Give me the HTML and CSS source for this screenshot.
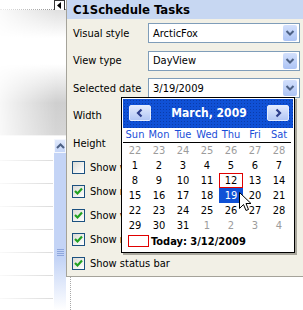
FILE: index.html
```html
<!DOCTYPE html>
<html lang="en">
<head>
  <meta charset="UTF-8" />
  <title>C1Schedule Tasks</title>
  <link rel="stylesheet" href="styles.css">
</head>
<body>

<div class="screen">
  <div class="side">
    <div class="side-top">
      <span class="pin-btn">
        <svg width="5" height="7" viewBox="0 0 5 7"><path d="M4 0 L0 3.5 L4 7 Z" fill="#000"/></svg>
      </span>
    </div>
    <div class="side-band"></div>
    <div class="side-gap"></div>
    <div class="side-dark"></div>
    <div class="side-list">
      <div class="rows">
        <div></div><div></div><div></div><div></div><div></div><div></div><div></div>
      </div>
      <div class="vscroll">
        <span class="vs-up">
          <svg width="9" height="6" viewBox="0 0 9 6"><path d="M1 5 L4.5 1.5 L8 5" fill="none" stroke="#4d6185" stroke-width="2"/></svg>
        </span>
        <span class="vs-grip"></span>
      </div>
    </div>
  </div>

  <div class="main">
    <div class="tasks">
      <div class="tasks-head">C1Schedule Tasks</div>

      <div class="fields">
        <div class="frow">
          <label>Visual style</label>
          <div class="combo"><span>ArcticFox</span><span class="combo-btn"><svg width="14" height="16" viewBox="0 0 14 16"><path d="M3.5 6 L7 9.5 L10.5 6" fill="none" stroke="#4d6185" stroke-width="2"/></svg></span></div>
        </div>
        <div class="frow">
          <label>View type</label>
          <div class="combo"><span>DayView</span><span class="combo-btn"><svg width="14" height="16" viewBox="0 0 14 16"><path d="M3.5 6 L7 9.5 L10.5 6" fill="none" stroke="#4d6185" stroke-width="2"/></svg></span></div>
        </div>
        <div class="frow">
          <label>Selected date</label>
          <div class="combo"><span>3/19/2009</span><span class="combo-btn"><svg width="14" height="16" viewBox="0 0 14 16"><path d="M3.5 6 L7 9.5 L10.5 6" fill="none" stroke="#4d6185" stroke-width="2"/></svg></span></div>
        </div>
        <div class="frow"><label>Width</label></div>
        <div class="frow"><label>Height</label></div>
      </div>

      <!-- only the start of the first four labels shows beside the open calendar -->
      <div class="checks">
        <div class="chk-row"><span class="chk"></span>Show w</div>
        <div class="chk-row"><span class="chk on"><svg width="11" height="11" viewBox="0 0 11 11"><path d="M2 5 L4.5 7.5 L9 2.5" fill="none" stroke="#21a121" stroke-width="2.2"/></svg></span>Show m</div>
        <div class="chk-row"><span class="chk on"><svg width="11" height="11" viewBox="0 0 11 11"><path d="M2 5 L4.5 7.5 L9 2.5" fill="none" stroke="#21a121" stroke-width="2.2"/></svg></span>Show v</div>
        <div class="chk-row"><span class="chk on"><svg width="11" height="11" viewBox="0 0 11 11"><path d="M2 5 L4.5 7.5 L9 2.5" fill="none" stroke="#21a121" stroke-width="2.2"/></svg></span>Show n</div>
        <div class="chk-row"><span class="chk on"><svg width="11" height="11" viewBox="0 0 11 11"><path d="M2 5 L4.5 7.5 L9 2.5" fill="none" stroke="#21a121" stroke-width="2.2"/></svg></span>Show status bar</div>
      </div>

      <!-- drop-down calendar of the "Selected date" combo -->
      <div class="cal">
        <div class="cal-head">
          <span class="cal-btn"><svg width="10" height="10" viewBox="0 0 10 10"><path d="M6.5 1.5 L3 5 L6.5 8.5" fill="none" stroke="#2d3e8c" stroke-width="2.2"/></svg></span>
          <span class="cal-title">March, 2009</span>
          <span class="cal-btn"><svg width="10" height="10" viewBox="0 0 10 10"><path d="M3.5 1.5 L7 5 L3.5 8.5" fill="none" stroke="#2d3e8c" stroke-width="2.2"/></svg></span>
        </div>
        <div class="dow">
          <span>Sun</span><span>Mon</span><span>Tue</span><span>Wed</span><span>Thu</span><span>Fri</span><span>Sat</span>
        </div>
        <div class="days">
          <span class="off">22</span><span class="off">23</span><span class="off">24</span><span class="off">25</span><span class="off">26</span><span class="off">27</span><span class="off">28</span>
          <span>1</span><span>2</span><span>3</span><span>4</span><span>5</span><span>6</span><span>7</span>
          <span>8</span><span>9</span><span>10</span><span>11</span><span class="today">12</span><span>13</span><span>14</span>
          <span>15</span><span>16</span><span>17</span><span>18</span><span class="sel">19</span><span>20</span><span>21</span>
          <span>22</span><span>23</span><span>24</span><span>25</span><span>26</span><span>27</span><span>28</span>
          <span>29</span><span>30</span><span>31</span><span class="off">1</span><span class="off">2</span><span class="off">3</span><span class="off">4</span>
        </div>
        <div class="cal-foot">
          <span class="foot-box"></span>
          <span>Today: 3/12/2009</span>
        </div>
      </div>

      <svg class="cursor" width="13" height="21" viewBox="0 0 13 21">
        <path d="M0.5 0.5 L0.5 16.5 L4.5 12.5 L7 18.5 L9.5 17.5 L7 11.5 L12 11.5 Z" fill="#fff" stroke="#000" stroke-width="1"/>
      </svg>
    </div>
    <div class="below"></div>
  </div>
</div>

</body>
</html>
```

FILE: styles.css
```css
* {
  box-sizing: border-box;
}
body {
  margin: 0;
  width: 303px;
  height: 310px;
  overflow: hidden;
  background: #fff;
  font-family: Tahoma, "DejaVu Sans Condensed", "DejaVu Sans", sans-serif;
  font-size: 11px;
  color: #000;
}
.screen {
  display: flex;
  height: 310px;
}

/* faded window behind the task panel */
.side {
  width: 66px;
  flex: none;
  display: flex;
  flex-direction: column;
  -webkit-mask-image: linear-gradient(to right, rgba(0,0,0,0.15), #000 85%);
  mask-image: linear-gradient(to right, rgba(0,0,0,0.15), #000 85%);
}
.side-top {
  height: 10px;
  border-bottom: 1px dotted #8a8a8a;
  display: flex;
  justify-content: flex-end;
  align-items: flex-start;
}
.pin-btn {
  width: 11px;
  height: 11px;
  margin-right: 1px;
  background: #fff;
  border: 1px solid #333;
  display: flex;
  align-items: center;
  justify-content: center;
}
.side-band {
  height: 28px;
  background: linear-gradient(#e0e0e0, #fff);
}
.side-gap {
  height: 26px;
}
.side-dark {
  height: 72px;
  background: linear-gradient(#fff, #cfcfcf 55%, #d6d6d6);
  border-bottom: 1px solid #f0f0f0;
}
.side-list {
  flex: 1;
  display: flex;
}
.rows {
  flex: 1;
  padding-top: 2px;
}
.rows div {
  height: 23px;
  border-bottom: 1px solid #dadada;
}
.vscroll {
  width: 13px;
  margin-top: 3px;
  background: linear-gradient(#c4d4f6 70%, #fff);
  border-left: 1px solid #fff;
  display: flex;
  flex-direction: column;
  align-items: center;
}
.vs-up {
  width: 12px;
  height: 14px;
  background: linear-gradient(#dfe8fc, #c6d6f8);
  border: 1px solid #f4f7fe;
  display: flex;
  align-items: center;
  justify-content: center;
}
.vs-grip {
  width: 7px;
  height: 7px;
  margin-top: 96px;
  background: repeating-linear-gradient(#8ea6dc 0 1px, transparent 1px 2px);
}

/* task panel */
.main {
  width: 237px;
  flex: none;
  display: flex;
  flex-direction: column;
  overflow: hidden;
}
.tasks {
  position: relative;
  width: 242px;
  height: 277px;
  flex: none;
  background: #f2f0e6;
  border-left: 1px solid #a5a39a;
  border-bottom: 1px solid #a5a39a;
}
.tasks-head {
  height: 19px;
  padding-left: 6px;
  background: #c7d7f2;
  font-weight: bold;
  font-size: 13px;
  line-height: 19px;
}
.fields {
  padding: 4px 0 0 6px;
}
.frow {
  display: flex;
  align-items: center;
  height: 20px;
  margin-bottom: 7.5px;
}
.frow:last-child {
  margin-bottom: 2px;
}
.frow label {
  width: 75px;
  flex: none;
}
.combo {
  width: 152px;
  height: 20px;
  border: 1px solid #7f9db9;
  background: #fff;
  display: flex;
  align-items: center;
  justify-content: space-between;
  padding: 0 2px 0 4px;
}
.combo-btn {
  width: 14px;
  height: 16px;
  border-radius: 2px;
  background: linear-gradient(#d3e0fc, #adc4f5);
  display: flex;
}
.checks {
  padding-left: 5px;
}
.chk-row {
  height: 24px;
  display: flex;
  align-items: center;
  gap: 5px;
  white-space: nowrap;
}
.chk {
  width: 13px;
  height: 13px;
  flex: none;
  border: 1px solid #1c5180;
  background: linear-gradient(135deg, #dcdcd6, #fff);
  display: flex;
  align-items: center;
  justify-content: center;
}

/* calendar drop-down */
.cal {
  position: absolute;
  left: 54px;
  top: 97px;
  width: 174px;
  height: 156px;
  padding: 1px;
  background: #fff;
  border: 1px solid #000;
  box-shadow: 2px 2px 0 #a8a69c;
}
.cal-head {
  height: 29px;
  padding: 6px 4px 0 6px;
  display: flex;
  justify-content: space-between;
  align-items: flex-start;
  background-color: #1051d6;
  background-image: radial-gradient(rgba(0, 20, 90, 0.35) 0.7px, transparent 0.9px);
  background-size: 3px 3px;
  color: #fff;
  font-weight: bold;
  font-size: 12px;
  line-height: 16px;
}
.cal-btn {
  width: 22px;
  height: 16px;
  border: 1px solid #e4ecfd;
  border-radius: 2px;
  background: linear-gradient(#e2eafd, #b2c7f5);
  display: flex;
  align-items: center;
  justify-content: center;
}
.dow {
  width: 168px;
  height: 15px;
  display: grid;
  grid-template-columns: repeat(7, 24px);
  border-bottom: 1px solid #000;
  color: #1a4ed8;
  text-align: center;
  line-height: 14px;
}
.days {
  display: grid;
  grid-template-columns: repeat(7, 24px);
  grid-auto-rows: 15px;
  text-align: center;
  line-height: 15px;
}
.days .off {
  color: #9c9c9c;
}
.days .today {
  border: 1px solid #e00000;
  line-height: 13px;
}
.days .sel {
  background: #1051d6;
  color: #fff;
}
.cal-foot {
  height: 16px;
  padding-left: 5px;
  display: flex;
  align-items: center;
  gap: 2px;
  font-weight: bold;
}
.foot-box {
  width: 21px;
  height: 12px;
  border: 1px solid #e00000;
}
.cursor {
  position: absolute;
  left: 172px;
  top: 192px;
}

.below {
  flex: 1;
  margin-left: 4px;
  border-left: 1px dotted #a8a8a8;
}
```
